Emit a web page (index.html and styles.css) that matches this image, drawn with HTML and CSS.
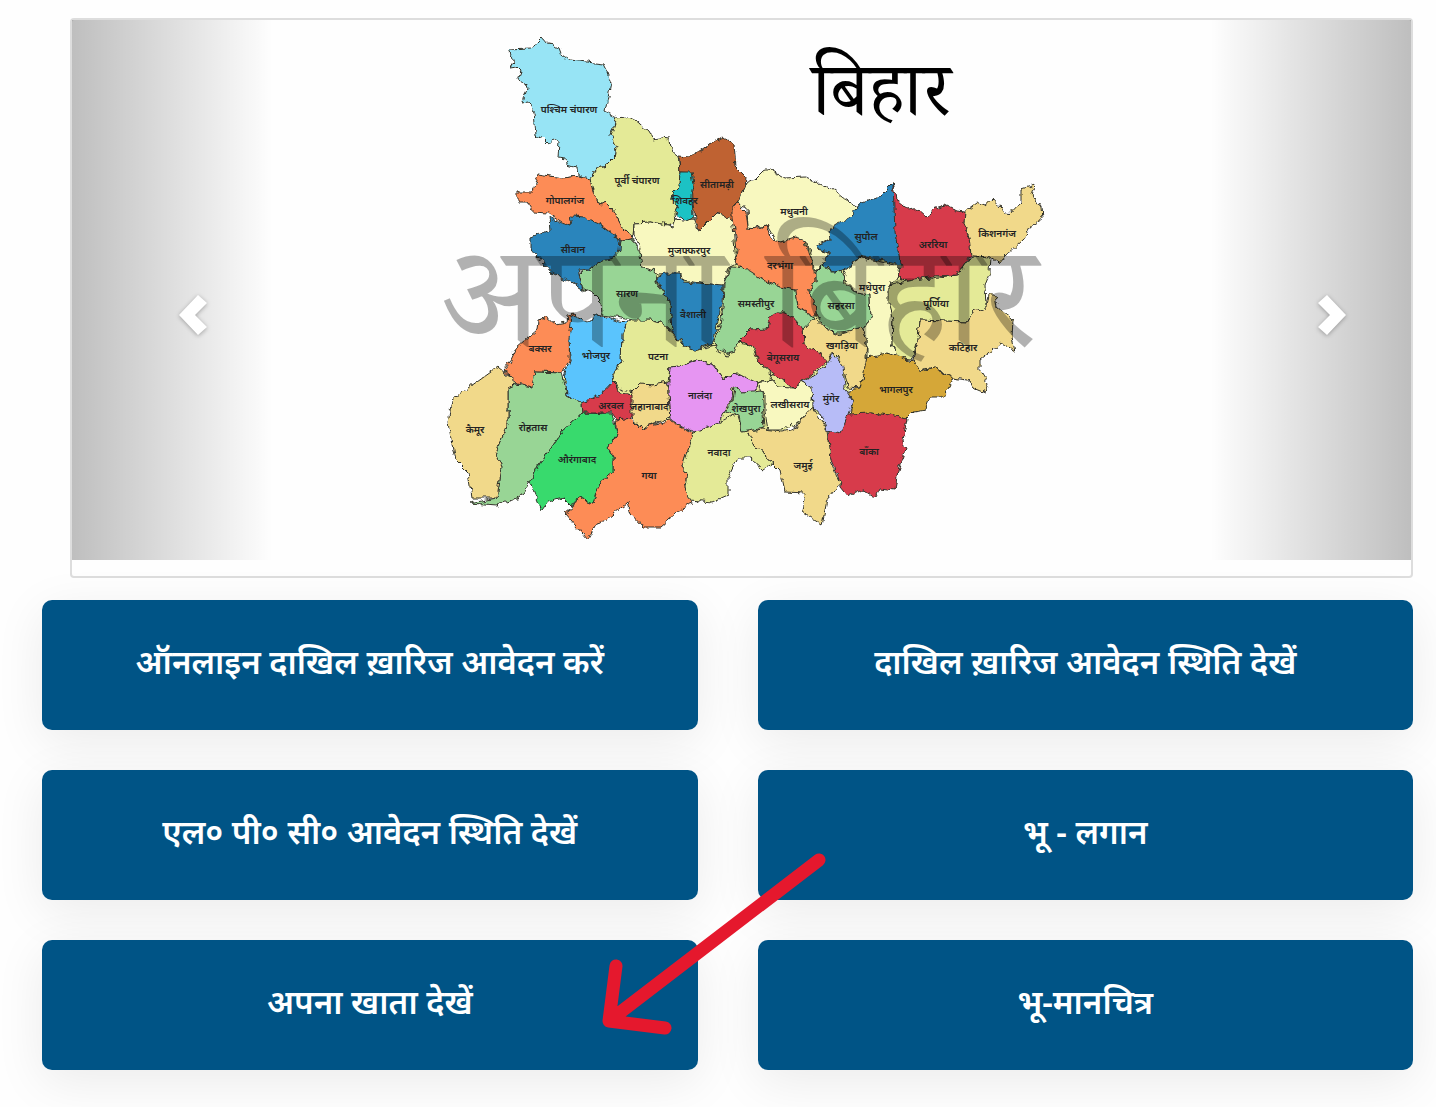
FILE: index.html
```html
<!DOCTYPE html>
<html lang="hi">
<head>
<meta charset="utf-8">
<meta name="viewport" content="width=device-width, initial-scale=1">
<title>बिहार भूमि</title>
<link rel="stylesheet" href="styles.css">
</head>
<body>
<main class="page">
  <section class="carousel" aria-label="बिहार">
    <div class="slide">
      <svg class="map" viewBox="72 20 1339 540" role="img" aria-label="बिहार">
        <defs>
          <filter id="rough" x="-2%" y="-2%" width="104%" height="104%">
            <feTurbulence type="fractalNoise" baseFrequency="0.15" numOctaves="2" seed="4" result="noise"/>
            <feDisplacementMap in="SourceGraphic" in2="noise" scale="7" xChannelSelector="R" yChannelSelector="G"/>
          </filter>
        </defs>
        <polygon class="lime" points="640,240 740,240 850,245 960,265 960,330 860,380 830,410 760,440 690,430 600,400 560,380 630,330"/>
        <g class="districts" filter="url(#rough)">
          <polygon class="sky" points="509,50 532,49 537,42 542,37 547,43 553,44 559,48 562,56 570,60 603,64 607,72 611,83 608,98 605,111 617,117 614,127 611,135 617,147 615,157 607,165 598,167 590,178 585,177 578,175 577,168 567,165 566,158 558,157 559,142 553,139 548,143 542,137 536,135 534,112 528,102 523,103 527,88 525,82 518,80 521,72 517,68 510,69 513,60"/>
          <polygon class="lime" points="617,117 625,116 632,118 640,124 649,132 653,139 660,138 670,139 671,150 678,156 680,170 679,187 673,193 672,200 678,207 675,213 676,222 668,225 650,222 634,223 633,237 622,227 613,210 605,202 600,205 593,192 590,178 598,167 607,165 615,157 617,147 611,135 614,127"/>
          <polygon class="cream" points="634,223 650,222 668,225 673,227 676,219 683,220 693,219 697,229 702,228 712,215 722,213 733,222 734,240 736,264 728,268 724,283 722,286 700,283 682,280 681,273 658,275 655,271 645,271 640,265 641,247 634,237"/>
          <polygon class="brown" points="679,156 690,157 702,150 712,143 723,137 734,145 736,167 746,177 745,187 740,197 737,203 732,208 733,222 718,212 700,230 695,222 693,202 692,173 680,172"/>
          <polygon class="teal" points="680,172 692,172 694,185 692,195 693,218 686,221 682,217 675,213 678,207 672,200 673,193 679,187"/>
          <polygon class="cream" points="746,184 755,180 763,172 772,170 785,178 805,177 820,184 833,190 845,199 858,207 850,220 830,230 832,238 817,245 830,255 822,265 815,270 807,243 777,242 767,225 748,230 747,208 737,205 740,197"/>
          <polygon class="lime" points="627,322 632,319 650,320 660,323 672,332 683,345 695,350 715,345 718,352 728,356 738,343 750,345 755,355 760,363 773,375 772,380 757,383 737,373 723,379 713,365 697,360 680,366 670,367 668,382 653,385 640,385 633,392 617,387 613,378 621,360 622,335"/>
          <polygon class="green" points="622,240 633,239 640,253 642,268 655,271 658,285 670,303 672,331 660,322 650,320 632,320 603,315 602,302 593,293 582,288 580,270 590,269 600,262 615,256"/>
          <polygon class="orange" points="518,192 533,192 538,174 563,178 578,176 590,178 593,192 600,205 605,202 613,210 622,227 633,238 622,241 603,227 577,216 570,225 562,222 548,213 533,212 527,203 518,203"/>
          <polygon class="blue" points="530,238 543,233 550,230 549,217 562,223 570,225 572,216 583,217 600,225 621,241 620,250 613,258 600,262 590,269 578,269 583,290 570,282 552,273 538,257 530,248"/>
          <polygon class="green" points="724,283 730,267 750,268 762,279 780,287 796,290 798,308 812,315 815,320 802,330 790,320 783,310 780,315 770,327 767,332 750,330 738,343 735,352 728,354 716,348 715,340 720,325 723,308"/>
          <polygon class="blue" points="657,278 665,273 680,273 683,282 723,285 722,303 713,343 695,350 683,345 672,330 670,303 660,287"/>
          <polygon class="green" points="822,265 832,272 842,270 845,283 857,293 870,295 871,317 863,330 840,333 828,333 817,315 812,298 808,293 815,282 815,272"/>
          <polygon class="orange" points="732,207 738,204 746,212 748,228 757,229 767,225 772,240 782,242 795,238 805,241 809,255 814,270 815,282 807,293 815,300 816,315 812,315 798,308 796,290 780,287 762,279 750,271 735,264 737,250 734,230 732,218"/>
          <polygon class="cream" points="846,270 858,257 900,266 897,280 888,285 893,320 892,343 898,359 867,357 867,340 863,330 871,317 870,295 857,293 843,278"/>
          <polygon class="blue" points="817,245 830,240 829,230 838,224 850,218 860,204 880,196 893,183 896,215 897,245 901,265 880,260 857,257 848,269 833,272 822,265 829,253 818,250"/>
          <polygon class="red" points="893,182 897,200 910,211 918,209 927,217 932,209 945,205 957,211 965,212 964,223 969,237 971,253 963,267 957,275 933,276 913,281 897,278 901,267 895,233"/>
          <polygon class="sand" points="965,212 977,203 985,206 993,199 1008,216 1021,202 1021,189 1035,185 1032,195 1041,207 1042,218 1030,227 1023,240 1005,257 1000,263 990,257 971,256 969,237 964,223"/>
          <polygon class="lime" points="971,256 991,257 990,273 985,285 986,307 973,312 967,322 920,320 918,340 912,360 898,359 892,343 893,320 888,303 888,285 913,280 957,275 963,267"/>
          <polygon class="sand" points="986,307 988,295 995,295 997,307 1013,320 1012,337 1015,352 1002,343 980,360 980,370 988,383 985,393 973,388 967,380 953,378 930,367 918,372 913,363 918,340 920,320 967,322 973,312"/>
          <polygon class="orange" points="538,320 547,317 555,324 567,322 568,314 575,313 570,335 569,358 562,373 535,372 532,387 518,383 503,370 510,362 517,347 537,330"/>
          <polygon class="azure" points="572,315 587,322 592,321 595,315 603,316 620,321 627,322 622,335 621,360 613,375 612,383 603,395 582,404 567,395 565,373 570,358 569,340"/>
          <polygon class="green" points="535,372 562,373 567,395 582,403 583,413 563,430 540,463 530,483 520,498 497,505 470,503 497,498 502,467 495,453 508,423 508,388 517,384 532,387"/>
          <polygon class="sand" points="452,400 470,387 498,367 517,383 508,388 508,423 495,453 502,467 497,498 472,498 468,473 455,460 448,423"/>
          <polygon class="sand" points="632,392 640,384 653,385 668,382 668,393 670,418 650,425 642,430 632,418 628,405"/>
          <polygon class="orange" points="615,420 630,418 642,430 650,425 670,421 693,433 682,467 687,473 685,487 693,503 683,507 660,527 643,527 630,513 627,503 607,520 597,523 588,540 565,513 573,507 577,497 593,503 600,483 613,473 613,457 607,448 617,433"/>
          <polygon class="emerald" points="583,413 612,414 617,433 607,448 613,457 613,473 600,483 593,503 577,497 572,507 563,498 548,502 542,510 530,483 540,463 563,430"/>
          <polygon class="red" points="582,403 600,395 612,382 617,387 618,392 632,395 632,418 617,420 612,413 583,413"/>
          <polygon class="lime" points="693,432 720,422 737,413 742,430 748,432 755,447 773,463 763,470 750,458 737,458 728,477 728,495 712,502 690,500 685,487 687,473 682,467"/>
          <polygon class="pink" points="670,367 680,366 697,360 713,365 723,379 737,373 757,383 755,392 743,392 733,387 732,400 723,412 720,422 694,432 683,427 670,420 668,393"/>
          <polygon class="cream" points="757,383 773,380 778,387 792,388 802,382 813,387 812,400 815,407 807,415 800,420 795,428 790,424 783,430 768,430 765,412 765,395"/>
          <polygon class="green" points="735,387 743,392 762,390 765,428 742,432 739,415 725,412 733,400"/>
          <polygon class="sand" points="803,330 815,317 827,330 838,335 862,328 867,340 866,358 869,365 863,375 860,388 848,387 845,375 838,357 833,352 825,363 823,355 804,347"/>
          <polygon class="red" points="738,342 750,330 767,329 770,317 782,312 793,317 803,329 804,345 823,355 826,363 803,381 792,388 783,380 773,373 760,363 755,355 753,345"/>
          <polygon class="gold" points="867,357 887,353 913,362 920,372 930,367 953,378 947,390 943,397 930,397 925,410 913,412 905,420 890,415 870,413 850,415 853,400 848,390 860,388 863,375"/>
          <polygon class="red" points="832,415 850,414 870,413 890,415 907,419 903,440 905,450 898,470 895,490 880,488 875,498 862,490 848,497 840,487 838,475 830,457 828,437"/>
          <polygon class="sand" points="812,407 827,430 830,460 840,483 827,500 822,525 802,512 805,493 785,492 780,470 773,463 755,447 748,432 763,430 783,432 797,428 803,417"/>
          <polygon class="violet" points="833,353 843,367 845,388 853,400 847,417 840,433 827,430 822,417 813,407 812,388 803,382 825,367"/>
        </g>
        <g class="labels">
          <text x="569" y="113">पश्चिम चंपारण</text>
          <text x="637" y="184">पूर्वी चंपारण</text>
          <text x="717" y="188">सीतामढ़ी</text>
          <text x="685" y="204">शिवहर</text>
          <text x="565" y="204">गोपालगंज</text>
          <text x="573" y="253">सीवान</text>
          <text x="689" y="254">मुजफ्फरपुर</text>
          <text x="794" y="215">मधुबनी</text>
          <text x="780" y="269">दरभंगा</text>
          <text x="866" y="240">सुपौल</text>
          <text x="933" y="248">अररिया</text>
          <text x="997" y="237">किशनगंज</text>
          <text x="627" y="297">सारण</text>
          <text x="693" y="318">वैशाली</text>
          <text x="756" y="307">समस्तीपुर</text>
          <text x="841" y="309">सहरसा</text>
          <text x="872" y="291">मधेपुरा</text>
          <text x="936" y="307">पूर्णिया</text>
          <text x="963" y="351">कटिहार</text>
          <text x="540" y="352">बक्सर</text>
          <text x="596" y="359">भोजपुर</text>
          <text x="658" y="360">पटना</text>
          <text x="783" y="361">बेगूसराय</text>
          <text x="842" y="349">खगड़िया</text>
          <text x="700" y="399">नालंदा</text>
          <text x="746" y="412">शेखपुरा</text>
          <text x="790" y="408">लखीसराय</text>
          <text x="831" y="402">मुंगेर</text>
          <text x="896" y="393">भागलपुर</text>
          <text x="611" y="409">अरवल</text>
          <text x="649" y="410">जहानाबाद</text>
          <text x="475" y="433">कैमूर</text>
          <text x="533" y="431">रोहतास</text>
          <text x="577" y="463">औरंगाबाद</text>
          <text x="649" y="479">गया</text>
          <text x="719" y="456">नवादा</text>
          <text x="803" y="469">जमुई</text>
          <text x="869" y="455">बाँका</text>
        </g>
        <text class="watermark" x="442" y="346">अपना</text>
        <text class="watermark" x="770" y="346">बिहार</text>
        <text class="state" x="812" y="115">बिहार</text>
      </svg>
      <button class="control prev" type="button" aria-label="पिछला">
        <svg class="chevron" viewBox="0 0 28 40"><path d="M19 0 28 8 16 20 28 32 19 40 0 20z"/></svg>
      </button>
      <button class="control next" type="button" aria-label="अगला">
        <svg class="chevron" viewBox="0 0 28 40"><path d="M9 0 0 8 12 20 0 32 9 40 28 20z"/></svg>
      </button>
    </div>
  </section>

  <nav class="services">
    <a class="service" href="#mutation-apply">ऑनलाइन दाखिल ख़ारिज आवेदन करें</a>
    <a class="service" href="#mutation-status">दाखिल ख़ारिज आवेदन स्थिति देखें</a>
    <a class="service" href="#lpc-status">एल० पी० सी० आवेदन स्थिति देखें</a>
    <a class="service" href="#lagaan">भू - लगान</a>
    <a class="service" href="#khata">अपना खाता देखें</a>
    <a class="service" href="#naksha">भू-मानचित्र</a>
    <svg class="pointer" viewBox="0 0 1371 470" aria-hidden="true"><path d="M777 260 567 421M574 366 567 421 623 428"/></svg>
  </nav>
</main>
</body>
</html>
```
FILE: styles.css
```css
* {
  box-sizing: border-box;
}

body {
  margin: 0;
  background: #fefefe;
  font-family: "Noto Sans", "Noto Sans Devanagari", sans-serif;
}

.page {
  padding: 18px 23px 37px 42px;
}

.carousel {
  margin-left: 28px;
  padding-bottom: 16px;
  border: 2px solid #ddd;
  border-radius: 4px;
}

.slide {
  position: relative;
}

.map {
  display: block;
  width: 100%;
}

.districts {
  stroke: #33332a;
  stroke-width: 1;
  stroke-linejoin: round;
}

.sky { fill: #97e4f5; }
.lime { fill: #e4ea97; }
.cream { fill: #f8f8bf; }
.brown { fill: #bf6230; }
.teal { fill: #1fc2c4; }
.green { fill: #98d595; }
.orange { fill: #fd8c56; }
.blue { fill: #2c85bc; }
.red { fill: #d73a4c; }
.sand { fill: #f1d98a; }
.azure { fill: #5ac4fd; }
.emerald { fill: #39da6d; }
.pink { fill: #e695f2; }
.gold { fill: #d5a738; }
.violet { fill: #b7bcf7; }

.labels {
  font-size: 10px;
  font-weight: 600;
  text-anchor: middle;
  fill: #222;
}

.watermark {
  font-family: "Liberation Serif", "Noto Serif Devanagari", serif;
  font-size: 144px;
  fill: #000;
  fill-opacity: 0.3;
}

.state {
  font-family: "Liberation Serif", "Noto Serif Devanagari", serif;
  font-size: 75px;
}

.control {
  position: absolute;
  top: 0;
  bottom: 0;
  display: flex;
  align-items: center;
  justify-content: center;
  width: 15%;
  padding: 50px 0 0 42px;
  border: 0;
  cursor: pointer;
}

.prev {
  left: 0;
  background: linear-gradient(to right, rgba(0, 0, 0, 0.25), transparent);
}

.next {
  right: 0;
  background: linear-gradient(to left, rgba(0, 0, 0, 0.25), transparent);
}

.chevron {
  width: 28px;
  height: 40px;
  fill: #fff;
  overflow: visible;
  filter: drop-shadow(0 1px 2px rgba(0, 0, 0, 0.3));
}

.services {
  position: relative;
  display: grid;
  grid-template-columns: 1fr 1fr;
  gap: 40px 60px;
  margin-top: 22px;
}

.service {
  display: flex;
  align-items: center;
  justify-content: center;
  min-height: 130px;
  padding: 16px 16px 22px;
  border-radius: 10px;
  background: #005486;
  box-shadow: 0 12px 50px rgba(0, 0, 0, 0.08);
  color: #fff;
  font-size: 33px;
  font-weight: 600;
  line-height: 48px;
  text-align: center;
  text-decoration: none;
}

.pointer {
  position: absolute;
  inset: 0;
  width: 100%;
  height: 100%;
  pointer-events: none;
  fill: none;
  stroke: #e5182d;
  stroke-width: 13;
  stroke-linecap: round;
  stroke-linejoin: round;
}
```
